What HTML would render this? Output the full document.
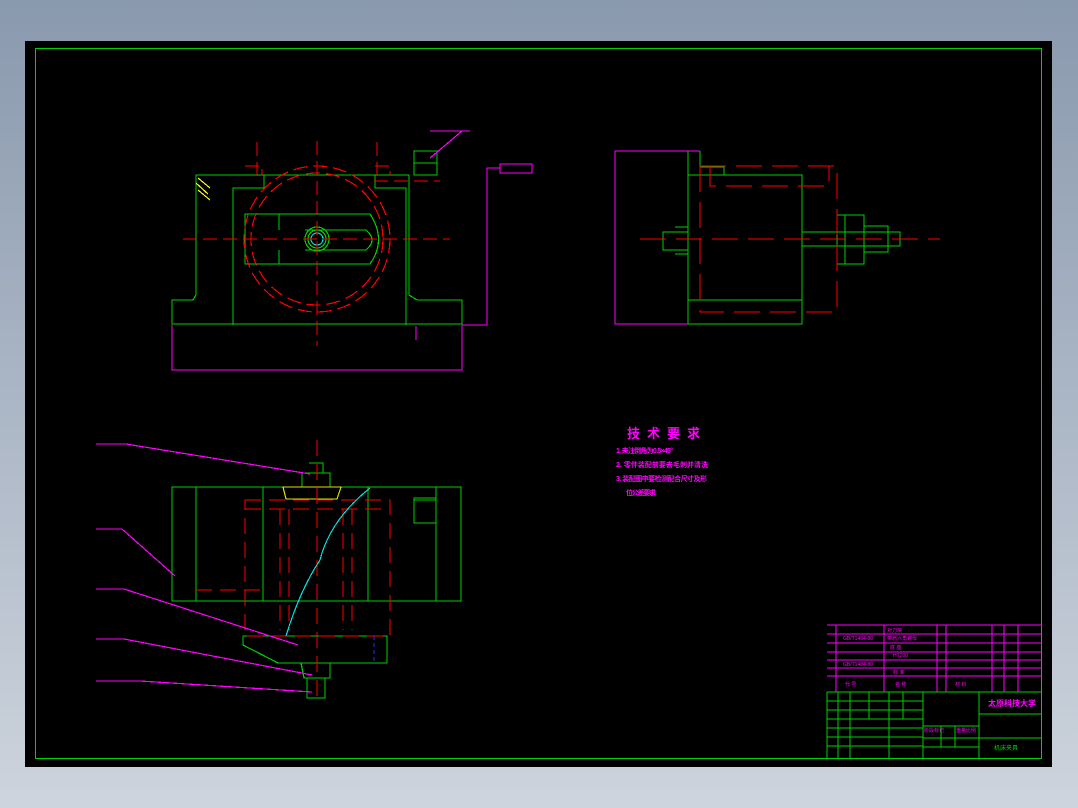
<!DOCTYPE html>
<html><head><meta charset="utf-8"><style>
html,body{margin:0;padding:0}
body{width:1078px;height:808px;background:linear-gradient(#8a99ae,#cdd4dd);overflow:hidden;font-family:"Liberation Sans","Noto Sans CJK SC",sans-serif}
svg{position:absolute;left:0;top:0}
</style></head><body>
<svg width="1078" height="808" viewBox="0 0 1078 808" shape-rendering="crispEdges">
<rect x="25" y="41" width="1027" height="726" fill="#000"/>
<rect x="35.5" y="48.5" width="1006" height="710" fill="none" stroke="#00d000" stroke-width="1"/>
<g fill="none" stroke-width="1.2">
<!-- front view -->
<g stroke="#00d000">
<path d="M196 175H409V295L417 300H462V324H172V300H193L196 295Z"/>
<path d="M233 325V188H264V175M406 325V188H375V175"/>
<path d="M245 214H370Q387 240 370 264H245Z"/>
<path d="M305 230H366Q378 240 366 250H305"/>
<circle cx="317" cy="239" r="12"/><circle cx="317" cy="239" r="9"/>
<path d="M279 214V230M279 250V264"/>
<path d="M414 151H437V175H414ZM414 163H437"/>
</g>
<circle cx="317" cy="239" r="6" stroke="#00e0e0"/>
<g stroke="#ff0000" stroke-dasharray="14 6">
<circle cx="317" cy="239" r="73"/><circle cx="317" cy="239" r="66"/>
<path d="M183 239H450M317 141V346M257 142V180M377 142V180"/>
<path d="M245 166H262V175M375 166H390V175M374 181H440"/>
</g>
<g stroke="#ff00ff">
<path d="M172 325V370H462V325M462 325H487V168H500M416 326V340M430 131H470M430 158L462 131"/>
</g>
<rect x="500" y="164" width="32" height="9" stroke="#ff00ff" fill="none"/>
<path d="M198 178L210 188M196 183L208 194M198 190L210 200" stroke="#ffff00"/>
<!-- side view -->
<g stroke="#00d000">
<path d="M688 151V324H802V175H688M688 300H802M700 151V167H724V175"/>
<path d="M663 232H688V250H663ZM675 227H688V254H675M802 232H900V246H802M837 215H864V264H837ZM845 215V264M864 226H888V252H864"/>
</g>
<path d="M615 151V324H688M615 151H700" stroke="#ff00ff"/>
<g stroke="#ff0000" stroke-dasharray="26 10">
<path d="M700 166H837V312H700ZM710 166V186H829V166M640 239H940"/>
</g>
<!-- bottom view -->
<g stroke="#00d000">
<path d="M172 487H461V601H172ZM196 487V601M263 487V601M368 487V601M436 487V601M414 498H436V523H414ZM414 500H436"/>
<path d="M243 636H387V663H278L243 645ZM301 663H330V678H304ZM307 678V698H325V678M302 473H330V487H302ZM309 463H323V473"/>
<path d="M283 487H341L337 499H286Z" stroke="#e0e000"/>
</g>
<g stroke="#ff0000" stroke-dasharray="16 8">
<path d="M245 500H390V636H245ZM245 509H388M280 509V630M289 509V630M343 509V630M352 509V630M196 590H268M317 440V700"/>
</g>
<path d="M374 636V662" stroke="#2030ff" stroke-dasharray="4 3"/>
<path d="M370 488Q330 520 320 560Q300 590 286 636" stroke="#00e0e0"/>
<g stroke="#ff00ff">
<path d="M96 444H126L310 474M96 529H122L175 576M96 589H124L298 645M96 639H124L312 675M96 681H140L312 692"/>
</g>
<!-- title block -->
<g stroke="#ff00ff">
<path d="M827 625H1042M827 634H1042M827 643H1042M827 652H1042M827 660H1042M827 668H1042M827 676H1042M827 692H1042"/>
<path d="M836 625V692M884 625V692M937 625V692M946 625V692M992 625V692M1004 625V692M1018 625V692"/>
</g>
<g stroke="#00d000">
<path d="M827 692V759M827 692H1042M838 692V759M850 692V759M869 692V719M889 692V759M903 692V719M923 692V759M979 692V759M827 701H923M827 710H923M827 719H923M827 728H923M827 737H923M827 746H923M923 726H979M923 738H979M923 747H979M979 714H1042M979 738H1042M941 726V747M955 726V747"/>
</g>
</g>
<g fill="#ff00ff" font-weight="bold">
<text x="627" y="438" font-size="13" letter-spacing="7">技术要求</text>
<text x="616" y="453" font-size="7" textLength="57">1. 未注倒角为0.5×45°</text>
<text x="616" y="467" font-size="7" textLength="92">2. 零件装配前要去毛刺并清洗</text>
<text x="616" y="481" font-size="7" textLength="91">3. 装配图中要检测配合尺寸及形</text>
<text x="626" y="495" font-size="7" textLength="30">位公差要求</text>
<text x="988" y="706" font-size="8">太原科技大学</text>
</g>
<g fill="#ff00ff" font-size="5">
<text x="887" y="632">对刀块</text><text x="843" y="640">GB/T1484-80</text><text x="887" y="640">带肩六角螺母</text>
<text x="890" y="649">底 座</text><text x="893" y="657">HT200</text><text x="843" y="666">GB/T1484-80</text>
<text x="893" y="674">标 准</text><text x="845" y="686">代 号</text><text x="895" y="686">名 称</text><text x="955" y="686">材 料</text>
<text x="924" y="732">阶段标记</text><text x="956" y="732">重量</text><text x="966" y="732">比例</text>
</g>
<text x="994" y="750" fill="#00d000" font-size="6">机床夹具</text>
</svg>
</body></html>
